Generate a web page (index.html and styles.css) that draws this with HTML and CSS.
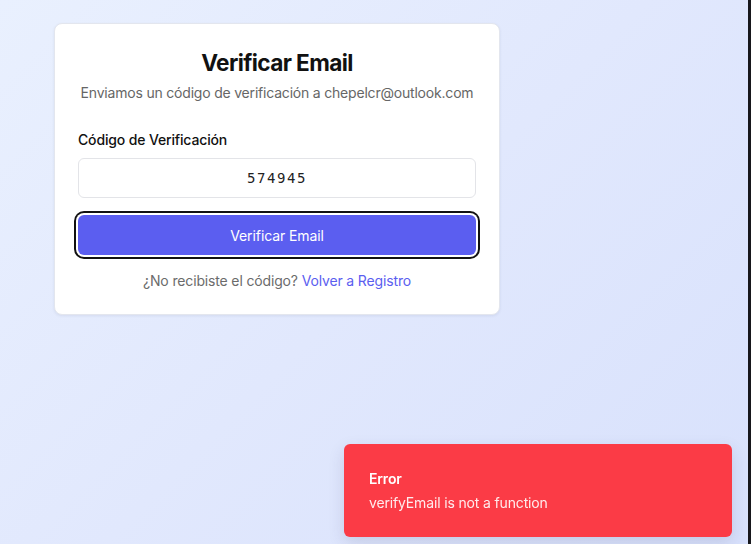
FILE: index.html
```html
<!DOCTYPE html>
<html lang="es">
<head>
<meta charset="utf-8">
<link rel="stylesheet" href="styles.css">
</head>
<body>
<div class="page">
  <main class="main">
    <section class="card">
      <header class="head">
        <h1 class="title">Verificar Email</h1>
        <p class="subtitle">Enviamos un código de verificación a chepelcr@outlook.com</p>
      </header>
      <form class="form">
        <label class="label" for="code">Código de Verificación</label>
        <input class="input" id="code" type="text" value="574945">
        <button class="btn" type="button">Verificar Email</button>
        <p class="foot">¿No recibiste el código? <a class="link" href="#">Volver a Registro</a></p>
      </form>
    </section>
  </main>
  <div class="strip"></div>
</div>
<div class="toast">
  <div class="toast-title">Error</div>
  <div class="toast-msg">verifyEmail is not a function</div>
</div>
</body>
</html>
```
FILE: styles.css
```css
* { box-sizing: border-box; }
html, body { margin: 0; height: 100%; }
body {
  font-family: Inter, "Noto Sans", sans-serif;
  color: #111;
  letter-spacing: -0.15px;
}
.page {
  display: flex;
  height: 544px;
  overflow: hidden;
}
.main {
  flex: 1;
  background: linear-gradient(135deg, #e9f0fe 0%, #e1e8fd 50%, #d8e1fc 100%);
  padding: 23px 0 0 54px;
}
.strip {
  width: 3px;
  background: #17171c;
}
.card {
  width: 446px;
  background: #fff;
  border: 1px solid #e3e6ee;
  border-radius: 8px;
  box-shadow: 0 1px 3px rgba(30, 40, 80, 0.08);
  padding: 23px 23px 23px;
}
.head { text-align: center; }
.title {
  margin: 0;
  font-size: 22.6px;
  line-height: 32px;
  font-weight: 700;
  letter-spacing: -0.6px;
  color: #111;
}
.subtitle {
  margin: 4px -10px 0;
  font-size: 14px;
  line-height: 20px;
  color: #666;
  white-space: nowrap;
  letter-spacing: -0.2px;
}
.form {
  display: flex;
  flex-direction: column;
  margin-top: 27px;
}
.label {
  font-size: 14px;
  line-height: 20px;
  font-weight: 500;
  color: #111;
}
.input {
  margin-top: 8px;
  height: 40px;
  width: 100%;
  border: 1px solid #e3e4e8;
  border-radius: 6px;
  text-align: center;
  font-family: "DejaVu Sans Mono", monospace;
  font-size: 14px;
  letter-spacing: 1.6px;
  color: #222;
  background: #fff;
  outline: none;
}
.btn {
  margin-top: 17px;
  height: 40px;
  width: 100%;
  border: none;
  border-radius: 6px;
  background: #5b5ef0;
  color: #fff;
  font-family: Inter, sans-serif;
  font-size: 14px;
  font-weight: 400;
  letter-spacing: -0.1px;
  box-shadow: 0 0 0 2px #fff, 0 0 0 4px #111;
}
.foot {
  margin: 16px 0 0;
  text-align: center;
  font-size: 14px;
  line-height: 20px;
  color: #6b6b6b;
}
.link {
  color: #5b5ef0;
  text-decoration: none;
  font-weight: 400;
}
.toast {
  position: fixed;
  right: 19px;
  bottom: 7px;
  width: 388px;
  height: 93px;
  background: #fb3b46;
  border-radius: 6px;
  padding: 25px 25px 24px;
  box-shadow: 0 6px 16px rgba(60, 60, 100, 0.15);
  color: #fff;
}
.toast-title {
  font-size: 14px;
  line-height: 20px;
  font-weight: 600;
}
.toast-msg {
  margin-top: 4px;
  font-size: 14px;
  line-height: 20px;
  color: rgba(255, 255, 255, 0.9);
}
```
